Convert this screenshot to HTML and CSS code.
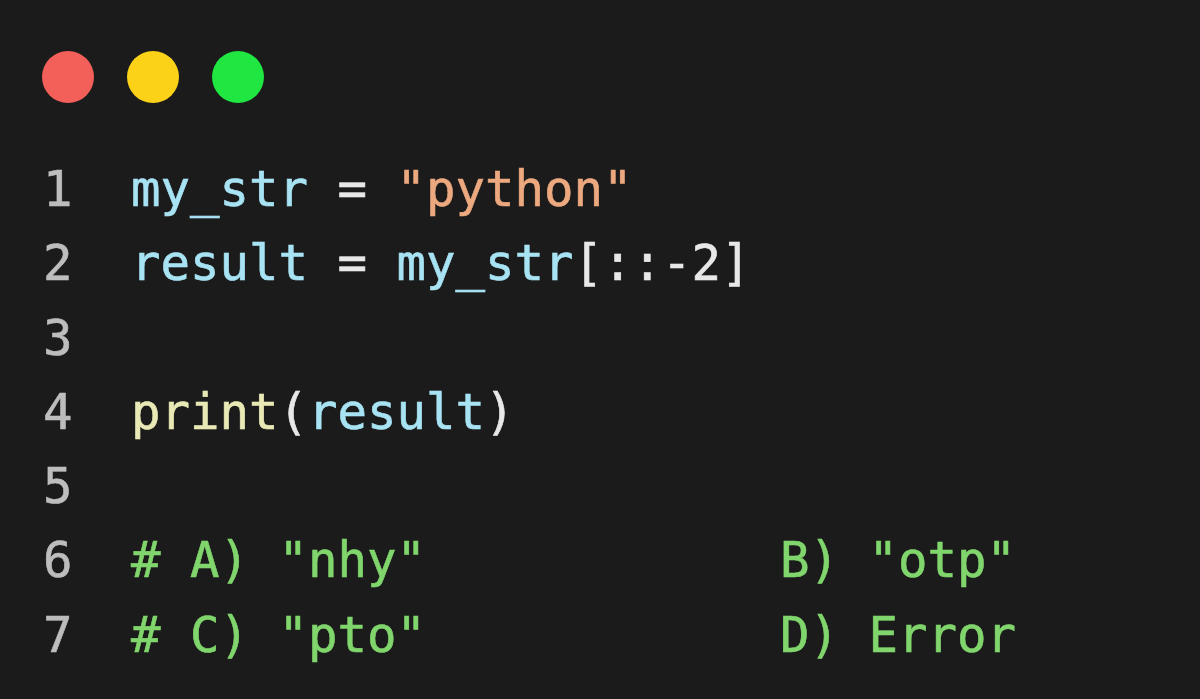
FILE: index.html
```html
<!DOCTYPE html>
<html lang="en">
<head>
<meta charset="utf-8">
<title>Python quiz</title>
<link rel="stylesheet" href="styles.css">
</head>
<body>
<main class="window">
  <header class="titlebar">
    <span class="dot dot-red"></span>
    <span class="dot dot-yellow"></span>
    <span class="dot dot-green"></span>
  </header>
  <section class="code">
    <div class="row"><span class="ln">1</span><span class="src"><span class="var">my_str</span><span class="op"> = </span><span class="str">"python"</span></span></div>
    <div class="row"><span class="ln">2</span><span class="src"><span class="var">result</span><span class="op"> = </span><span class="var">my_str</span><span class="op">[::-2]</span></span></div>
    <div class="row"><span class="ln">3</span><span class="src"></span></div>
    <div class="row"><span class="ln">4</span><span class="src"><span class="fn">print</span><span class="op">(</span><span class="var">result</span><span class="op">)</span></span></div>
    <div class="row"><span class="ln">5</span><span class="src"></span></div>
    <div class="row"><span class="ln">6</span><span class="src"><span class="cmt"># A) "nhy"            B) "otp"</span></span></div>
    <div class="row"><span class="ln">7</span><span class="src"><span class="cmt"># C) "pto"            D) Error</span></span></div>
  </section>
</main>
</body>
</html>
```
FILE: styles.css
```css
html, body {
  margin: 0;
  padding: 0;
  background: #1b1b1b;
}

.window {
  width: 1200px;
  height: 699px;
  background: #1b1b1b;
  overflow: hidden;
}

.titlebar {
  display: flex;
  gap: 33px;
  padding: 51px 0 0 42px;
  height: 52px;
}

.dot {
  width: 52px;
  height: 52px;
  border-radius: 50%;
  display: block;
}
.dot-red { background: #f3605a; }
.dot-yellow { background: #fcd219; }
.dot-green { background: #1fe640; }

.code {
  margin-top: 50px;
  font-family: "DejaVu Sans Mono", "Liberation Mono", monospace;
  font-size: 49px;
  line-height: 74.3px;
  -webkit-text-stroke: 0.6px currentColor;
}

.row {
  display: grid;
  grid-template-columns: 88px 1fr;
  padding-left: 43px;
  height: 74.3px;
  white-space: pre;
}

.ln { color: #bdbdbd; }
.var { color: #a8e3f4; }
.op { color: #e8e8e8; }
.str { color: #eca97f; }
.fn { color: #e9e9b6; }
.cmt { color: #80d66c; }
```
